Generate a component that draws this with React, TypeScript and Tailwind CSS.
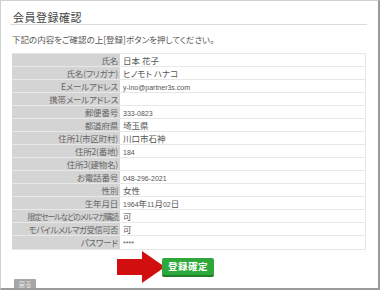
import React from "react";

const rows: [string, string, string?][] = [
  ["氏名", "日本 花子"],
  ["氏名(フリガナ)", "ヒノモト ハナコ"],
  ["Eメールアドレス", "y-ino@partner3s.com"],
  ["携帯メールアドレス", ""],
  ["郵便番号", "333-0823"],
  ["都道府県", "埼玉県"],
  ["住所1(市区町村)", "川口市石神"],
  ["住所2(番地)", "184"],
  ["住所3(建物名)", ""],
  ["お電話番号", "048-296-2021"],
  ["性別", "女性"],
  ["生年月日", "1964年11月02日"],
  ["限定セールなどのメルマガ購読", "可", "tight"],
  ["モバイルメルマガ受信可否", "可", "semi"],
  ["パスワード", "****"],
];

function Mixed({ s }: { s: string }) {
  const parts = s.match(/[\x21-\x7e]+|[^\x21-\x7e]+/g) || [];
  return (
    <>
      {parts.map((p, i) =>
        /^[\x21-\x7e]+$/.test(p) ? (
          <span key={i} className="text-[7px] font-['Liberation_Sans',sans-serif]">
            {p}
          </span>
        ) : (
          <span key={i}>{p}</span>
        )
      )}
    </>
  );
}

export default function App() {
  return (
    <div
      className="w-[380px] h-[290px] bg-white border-l border-t border-r-2 border-b-2 flex flex-col overflow-hidden [font-feature-settings:'palt']"
      style={{
        fontFamily: '"Noto Sans CJK JP", "Noto Sans", sans-serif',
        borderLeftColor: "#d0d0d0",
        borderTopColor: "#d0d0d0",
        borderRightColor: "#9a9a9a",
        borderBottomColor: "#9a9a9a",
      }}
    >
      <div className="ml-[9px] mr-[11px] mt-[9px] pl-[3px] border-b border-[#dcdcdc] text-[11px] leading-[14px] text-[#444] tracking-[0.5px]">
        会員登録確認
      </div>
      <div className="ml-[11px] mt-[8px] text-[8.5px] leading-[12px] text-[#555]">
        下記の内容をご確認の上[登録]ボタンを押してください。
      </div>
      <div className="ml-[11px] mr-[12px] mt-[8px] border border-[#e6e6e6] border-l-0">
        {rows.map(([k, v, t], i) => (
          <div key={i} className="flex h-[13px] border-b border-[#e8e8e8] last:border-b-0">
            <div
              className={
                "w-[108px] shrink-0 bg-[#d4d4d4] text-right pr-[2px] leading-[13px] text-[#666] whitespace-nowrap overflow-hidden " +
                (t === "tight"
                  ? "text-[7.8px] tracking-[-1px]"
                  : t === "semi"
                  ? "text-[8.5px] tracking-[-0.6px]"
                  : "text-[8.5px] tracking-[-0.2px]")
              }
            >
              {k}
            </div>
            <div className="pl-[3px] text-[8.5px] leading-[13px] text-[#555] whitespace-nowrap">
              <Mixed s={v} />
            </div>
          </div>
        ))}
      </div>
      <div className="flex items-center mt-[1px] ml-[116px] h-[32px]">
        <svg width="48" height="32" viewBox="0 0 48 32" className="shrink-0">
          <polygon points="0,8 25,8 25,0 48,16 25,32 25,24 0,24" fill="#d20f0f" />
        </svg>
        <div className="ml-[-3px] bg-[#2ea83a] text-white text-[9.5px] font-bold leading-[17px] px-[6px] rounded-[2px] tracking-[0.5px] border-b-2 border-[#1e7f28]">
          登録確定
        </div>
      </div>
      <div className="ml-[13px] mt-[-4px] w-[22px] h-[10px] bg-[#a6a6a6] text-[#eee] text-[6.5px] leading-[10px] text-center rounded-t-[1px] shrink-0">
        戻る
      </div>
    </div>
  );
}
